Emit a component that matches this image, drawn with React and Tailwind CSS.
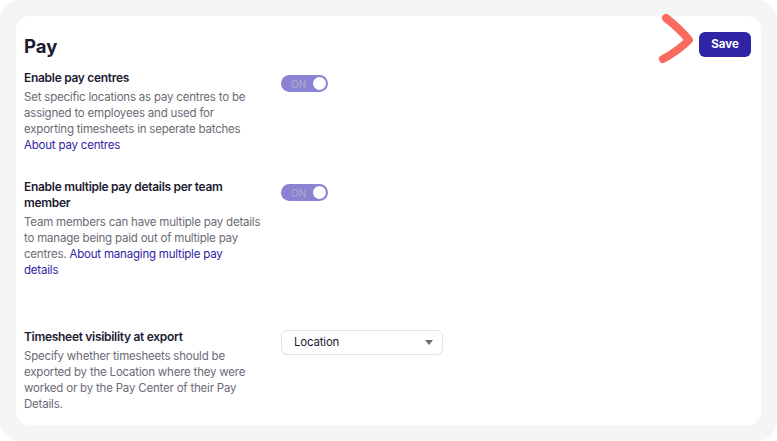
import React from 'react';

function Toggle() {
    return (
        <div className="relative w-[47px] h-[17px] rounded-full bg-[#8a82d2] flex items-center">
            <span className="ml-[10px] text-[10px] font-medium leading-none text-[#aba7c9]">ON</span>
            <span className="absolute right-[2px] top-[2px] w-[13px] h-[13px] rounded-full bg-white"></span>
        </div>
    );
}

function Lines({ lines }) {
    return lines.map((line, i) => (
        <div key={i} className="whitespace-nowrap">{line}</div>
    ));
}

function Row({ label, lines, control, controlTop }) {
    return (
        <div className="flex">
            <div className="w-[236px]">
                <div className="text-[12px] font-semibold leading-4 tracking-[-0.3px] text-[#1d1b33]">
                    <Lines lines={label} />
                </div>
                <div className="mt-[3px] text-[11.5px] leading-4 tracking-[-0.2px] text-[#6b6a75]">
                    <Lines lines={lines} />
                </div>
            </div>
            <div className={`ml-[21px] ${controlTop}`}>{control}</div>
        </div>
    );
}

const link = (text) => <span className="text-[#2e24a5]">{text}</span>;

export default function App() {
    return (
        <div className="w-[777px] h-[441px] bg-white" style={{ fontFamily: 'Inter, "Noto Sans", sans-serif' }}>
            <div className="relative w-full h-full rounded-[20px] bg-[#f5f5f8] p-4">
                <div className="w-full h-full rounded-[14px] bg-white pt-4 pl-2 pr-[10px]">
                    <div className="flex items-start justify-between">
                        <h1 className="text-[18.5px] font-bold leading-7 text-[#1d1b33]">Pay</h1>
                        <button className="w-[52px] h-[25px] rounded-md bg-[#2e24a5] text-white text-[11.5px] font-bold">Save</button>
                    </div>

                    <div className="mt-[10px]">
                        <Row
                            label={['Enable pay centres']}
                            lines={[
                                'Set specific locations as pay centres to be',
                                'assigned to employees and used for',
                                'exporting timesheets in seperate batches',
                                link('About pay centres'),
                            ]}
                            control={<Toggle />}
                            controlTop="mt-[5px]"
                        />
                    </div>

                    <div className="mt-[26px]">
                        <Row
                            label={['Enable multiple pay details per team', 'member']}
                            lines={[
                                'Team members can have multiple pay details',
                                'to manage being paid out of multiple pay',
                                <>centres. {link('About managing multiple pay')}</>,
                                link('details'),
                            ]}
                            control={<Toggle />}
                            controlTop="mt-[5px]"
                        />
                    </div>

                    <div className="mt-[51px]">
                        <Row
                            label={['Timesheet visibility at export']}
                            lines={[
                                'Specify whether timesheets should be',
                                'exported by the Location where they were',
                                'worked or by the Pay Center of their Pay',
                                'Details.',
                            ]}
                            control={
                                <div className="w-[162px] h-[25px] rounded-md border border-[#e2e2e8] bg-white flex items-center justify-between pl-3 pr-[9px]">
                                    <span className="text-[11.5px] tracking-[-0.2px] text-[#1d1b33]">Location</span>
                                    <svg width="8" height="5" viewBox="0 0 8 5"><path d="M0 0h8L4 5z" fill="#6b6a75" /></svg>
                                </div>
                            }
                            controlTop="mt-px"
                        />
                    </div>
                </div>

                <svg className="absolute left-[655px] top-[10px]" width="45" height="58" viewBox="655 10 45 58">
                    <path d="M666 18 Q680 29 689 40 Q678 51 663 59" fill="none" stroke="#fa6a5e" strokeWidth="8" strokeLinecap="round" strokeLinejoin="round" />
                </svg>
            </div>
        </div>
    );
}
